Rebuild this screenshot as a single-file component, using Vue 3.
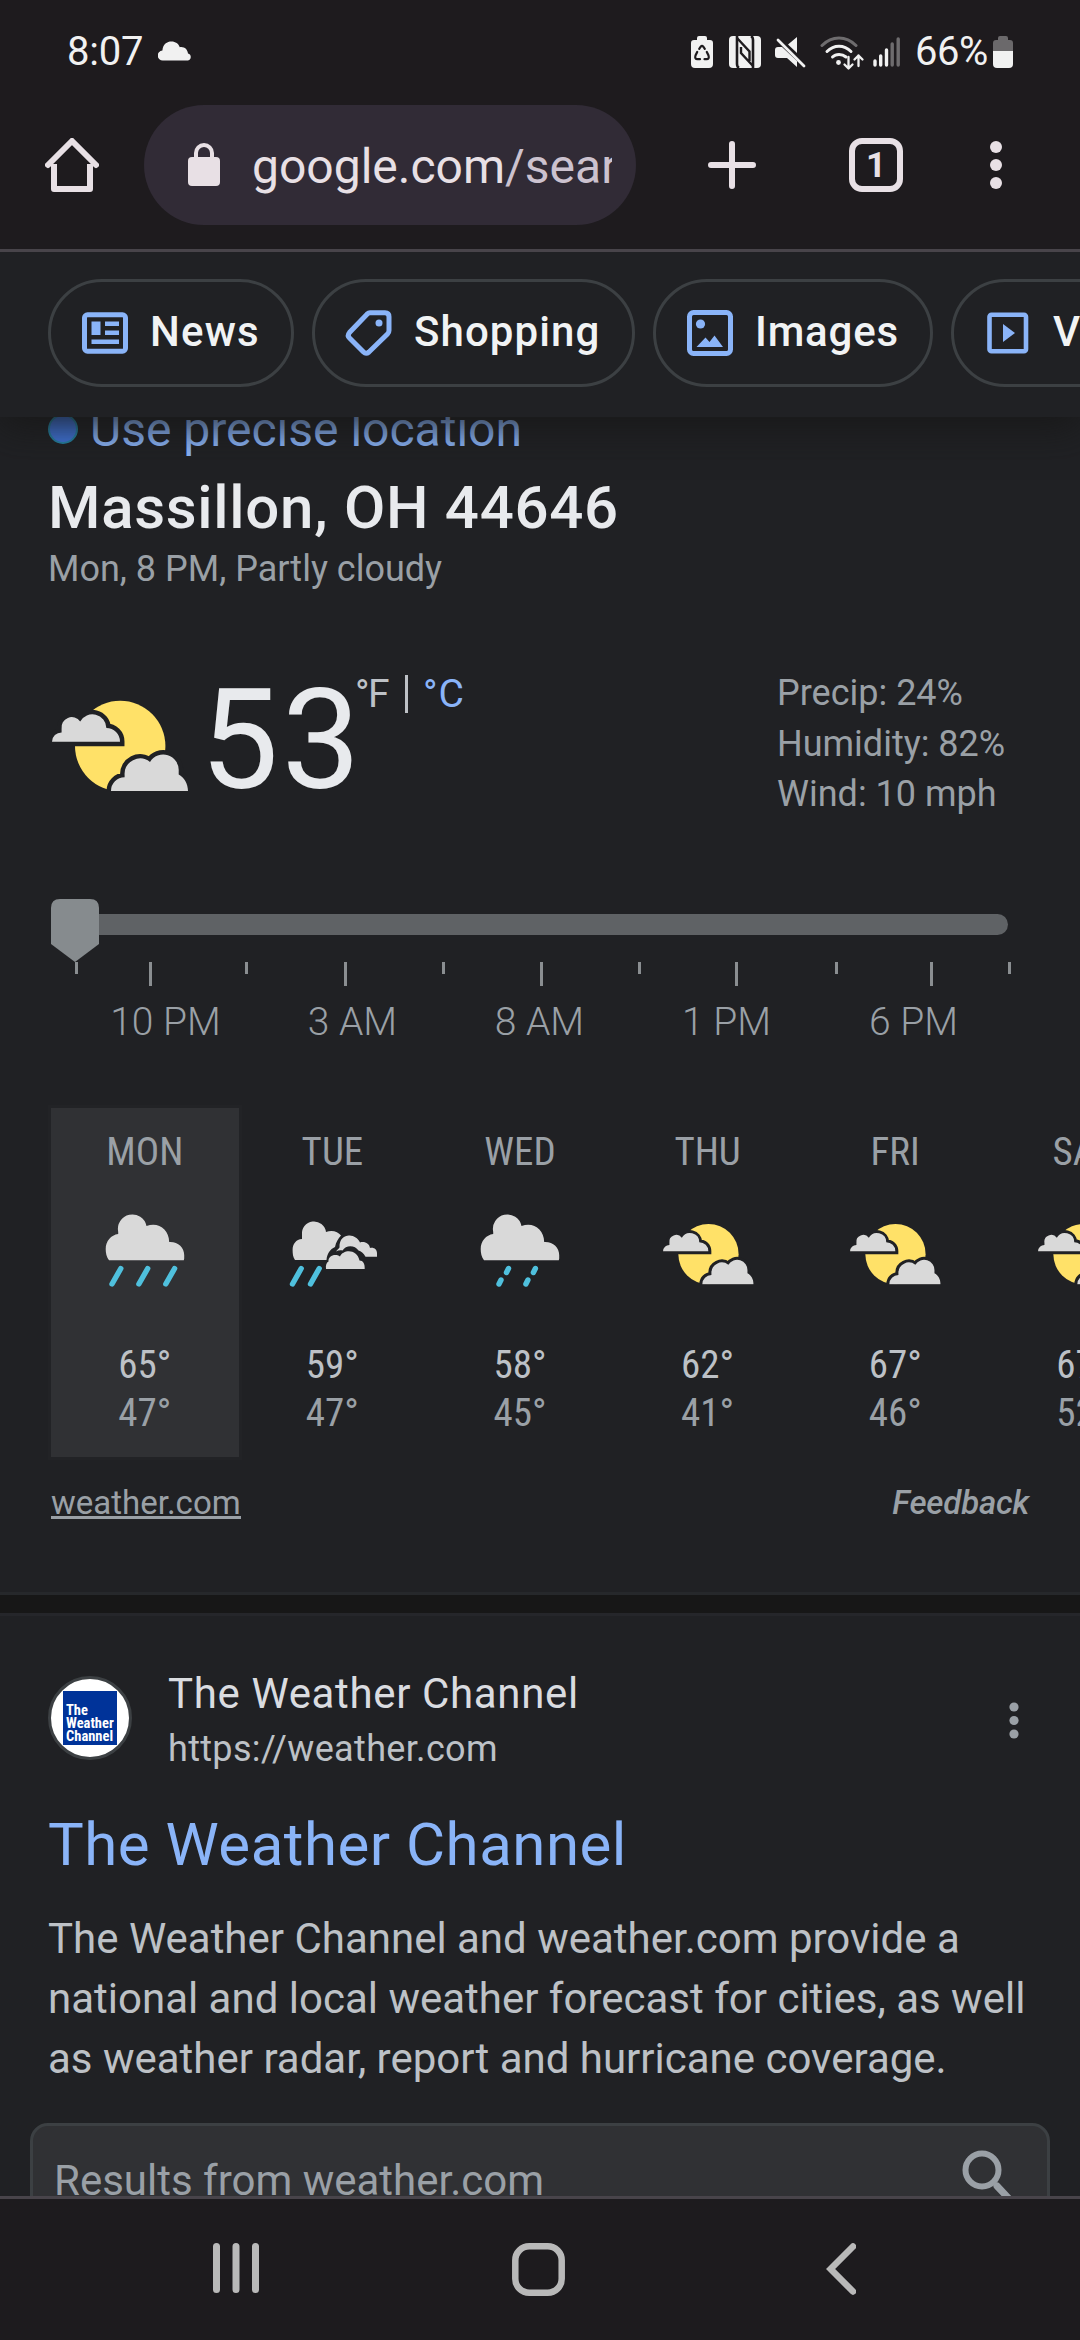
<script setup>
const chips = [
  { id: 'news', label: 'News', width: 246, spacing: 1.18 },
  { id: 'shopping', label: 'Shopping', width: 323, spacing: 1.09 },
  { id: 'images', label: 'Images', width: 280, spacing: 0.81 },
  { id: 'videos', label: 'Videos', width: 266, spacing: 0.9 },
]

const conditions = ['Precip: 24%', 'Humidity: 82%', 'Wind: 10 mph']

const shortTicks = [24, 194, 391, 587, 784, 957]
const longTicks = [98, 293, 489, 684, 879]
const hours = ['10 PM', '3 AM', '8 AM', '1 PM', '6 PM']

const days = [
  { name: 'MON', icon: 'rain', high: 65, low: 47 },
  { name: 'TUE', icon: 'scattered', high: 59, low: 47 },
  { name: 'WED', icon: 'showers', high: 58, low: 45 },
  { name: 'THU', icon: 'partly', high: 62, low: 41 },
  { name: 'FRI', icon: 'partly', high: 67, low: 46 },
  { name: 'SAT', icon: 'partly', high: 67, low: 52 },
]
</script>

<template>
  <div class="phone">
    <!-- Shared weather glyphs -->
    <svg class="defs" width="0" height="0" aria-hidden="true">
      <symbol id="partly" viewBox="0 0 136 92">
        <circle cx="68.2" cy="46" r="45.2" fill="#ffe168" />
        <path class="halo" d="M0 41.7A9.5 9.5 0 0 1 9.6 32.4V29A10.3 10.3 0 0 1 28.2 21.5A14 14 0 0 1 54.4 28A13.6 13.6 0 0 1 68 41.7Z" />
        <path fill="#d9d9d9" d="M0 41.7A9.5 9.5 0 0 1 9.6 32.4V29A10.3 10.3 0 0 1 28.2 21.5A14 14 0 0 1 54.4 28A13.6 13.6 0 0 1 68 41.7Z" />
        <path class="halo" d="M59 91A13.6 13.6 0 0 1 72.6 77.3V75A15.6 15.6 0 0 1 98 62A15.5 15.5 0 0 1 126.7 71V74.5C132 77 136 84 136 91Z" />
        <path fill="#d9d9d9" d="M59 91A13.6 13.6 0 0 1 72.6 77.3V75A15.6 15.6 0 0 1 98 62A15.5 15.5 0 0 1 126.7 71V74.5C132 77 136 84 136 91Z" />
      </symbol>
      <symbol id="bigcloud" viewBox="0 0 96 96">
        <path fill="#d9d9d9" d="M12 60.3C9.5 57 8.7 53 8.7 49C8.7 41 14 35 21.2 34V32A14.4 14.4 0 0 1 49.5 26C61 21.5 72 29 72.2 42C81 41.5 87.2 47.5 87.2 55V58.5L86.8 60.3Z" />
      </symbol>
    </svg>

    <header class="status">
      <span class="clock">8:07</span>
      <svg class="cloud" width="34" height="20" viewBox="0 0 34 20">
        <path fill="#f1f1f1" d="M5 19.5A5 5 0 0 1 4.4 9.5C5 3 9 .5 13.5 .5C17.5 .5 20.5 2.7 21.8 6.2C26.5 5.5 29.5 8.5 30 12.5A3.6 3.6 0 0 1 30 19.5Z" />
      </svg>
      <div class="status-icons">
        <svg width="22" height="32" viewBox="0 0 22 32">
          <path fill="#f1f1f1" d="M6 4V2Q6 0 8 0H14Q16 0 16 2V4H19Q22 4 22 7V28Q22 32 18 32H4Q0 32 0 28V7Q0 4 3 4Z" />
          <g fill="none" stroke="#1e1b1e" stroke-width="2.2" stroke-linecap="round">
            <path d="M8.2 12.8L9.7 10.7Q11 9.2 12.3 10.7L13.8 12.8" />
            <path d="M15.8 16L17.5 19.5Q18.6 23 15.5 23.2H13.5" />
            <path d="M9 23.2H6.5Q3.4 23 4.5 19.5L6.2 16" />
          </g>
        </svg>
        <svg width="32" height="32" viewBox="0 0 32 32">
          <rect width="32" height="32" rx="4" fill="#f1f1f1" />
          <path d="M8 0V28Q8 31 10 32M24 32V4Q24 1 22 0" fill="none" stroke="#1e1b1e" stroke-width="2.6" />
          <path d="M8 2L20.5 15.5V25M24 30L12 17V11" fill="none" stroke="#1e1b1e" stroke-width="2.4" />
        </svg>
        <svg width="31" height="32" viewBox="0 0 31 32">
          <path fill="#f1f1f1" d="M0 14Q0 11 3 11H7L22 25V31L12 22H3Q0 22 0 19ZM22 1V17L13 8.5Z" />
          <path d="M3 4L29 30" stroke="#f1f1f1" stroke-width="2.8" stroke-linecap="round" />
        </svg>
        <svg width="45" height="36" viewBox="0 0 45 36">
          <g fill="none" stroke="#f1f1f1" stroke-width="3" stroke-linecap="round">
            <path d="M2 9.5C12 -.5 26 -.5 36 9.5" stroke="#6e6c6e" />
            <path d="M7 15.5C14 8.5 24 8.5 31 15.5" />
            <path d="M12.5 21C16 17.5 22 17.5 26 21" />
          </g>
          <circle cx="18.5" cy="26.5" r="2.4" fill="#f1f1f1" />
          <g fill="none" stroke="#f1f1f1" stroke-width="2.3" stroke-linecap="round" stroke-linejoin="round">
            <path d="M28.5 21V32.5M24.5 28.5L28.5 32.5L32.5 28.5" />
            <path d="M38.5 30V19.5M34.5 23.5L38.5 19.5L42.5 23.5" />
          </g>
        </svg>
        <svg width="28" height="32" viewBox="0 0 28 32">
          <g stroke-width="3.4" stroke-linecap="round" stroke="#f1f1f1">
            <path d="M2 25V29M7.7 20V29M13.5 14V29" />
            <path d="M19.2 8V29M25.2 3V29" stroke="#6e6c6e" />
          </g>
        </svg>
        <span class="percent">66%</span>
        <svg width="20" height="32" viewBox="0 0 20 32">
          <path fill="#6b696b" d="M5 4V2Q5 0 7 0H13Q15 0 15 2V4H17Q20 4 20 7V16H0V7Q0 4 3 4Z" />
          <path fill="#f1f1f1" d="M0 15H20V28Q20 32 16 32H4Q0 32 0 28Z" />
        </svg>
      </div>
    </header>

    <div class="toolbar">
      <svg class="home" width="54" height="54" viewBox="0 0 54 54">
        <path d="M9 26V51H45V26" fill="none" stroke="#e8e0e5" stroke-width="6" stroke-linejoin="round" />
        <path d="M3 27L27 3L51 27" fill="none" stroke="#e8e0e5" stroke-width="6" stroke-linecap="round" stroke-linejoin="round" />
      </svg>
      <div class="omnibox">
        <svg width="32" height="43" viewBox="0 0 32 43">
          <path d="M8 17V10A8 8 0 0 1 24 10V17" fill="none" stroke="#e8e0e5" stroke-width="4" />
          <rect y="14" width="32" height="29" rx="4" fill="#e8e0e5" />
        </svg>
        <div class="url">google.com<span>/search</span></div>
      </div>
      <svg class="plus" width="48" height="48" viewBox="0 0 48 48">
        <path d="M24 3V45M3 24H45" stroke="#e8e0e5" stroke-width="6" stroke-linecap="round" />
      </svg>
      <div class="tabs">1</div>
      <svg class="more" width="12" height="48" viewBox="0 0 12 48" fill="#e8e0e5">
        <circle cx="6" cy="6" r="6" /><circle cx="6" cy="24" r="6" /><circle cx="6" cy="42" r="6" />
      </svg>
    </div>

    <nav class="chips">
      <div v-for="chip in chips" :key="chip.id" class="chip" :style="{ width: chip.width + 'px' }">
        <svg width="54" height="54" viewBox="0 0 54 54" fill="none" stroke="#8ab4f8" stroke-width="5">
          <template v-if="chip.id === 'news'">
            <rect x="6.5" y="8.8" width="41" height="36.4" rx="3" />
            <g fill="#8ab4f8" stroke="none">
              <rect x="13.5" y="15.5" width="9" height="13.5" />
              <rect x="27" y="15.5" width="14" height="4.5" />
              <rect x="27" y="24.5" width="14" height="4.5" />
              <rect x="13.5" y="33.5" width="27.5" height="4.5" />
            </g>
          </template>
          <template v-else-if="chip.id === 'shopping'">
            <path d="M28 6.8H43Q47 6.8 47 10.8V24.5Q47 26.5 45.5 28L27 46Q24 48.5 21.5 46L7.5 32Q5 29.5 7.5 26.5L25 8.2Q26.5 6.8 28 6.8Z" />
            <circle cx="37" cy="17" r="3.5" fill="#8ab4f8" stroke="none" />
          </template>
          <template v-else-if="chip.id === 'images'">
            <rect x="6.5" y="6.5" width="41" height="41" rx="4" />
            <g fill="#8ab4f8" stroke="none">
              <circle cx="17.5" cy="18" r="4.6" />
              <path d="M13.5 41L22.5 31.5L26.5 36L31.5 29.5L40 41Z" />
            </g>
          </template>
          <template v-else>
            <rect x="8.5" y="8.8" width="36.5" height="36.4" rx="2" stroke-width="4.6" />
            <path d="M22 18L34 27L22 36Z" fill="#8ab4f8" stroke="none" />
          </template>
        </svg>
        <span :style="{ letterSpacing: chip.spacing + 'px' }">{{ chip.label }}</span>
      </div>
    </nav>

    <main class="page">
      <section class="weather">
        <a class="precise"><i></i>Use precise location</a>
        <h1>Massillon, OH 44646</h1>
        <p class="subtitle">Mon, 8 PM, Partly cloudy</p>

        <div class="current">
          <svg class="now" width="136" height="92"><use href="#partly" width="136" height="92" /></svg>
          <span class="temp">53</span>
          <div class="units"><span>°F</span><i></i><a>°C</a></div>
          <ul>
            <li v-for="line in conditions" :key="line">{{ line }}</li>
          </ul>
        </div>

        <svg class="slider" width="960" height="87" viewBox="0 0 960 87">
          <rect x="10" y="15" width="947" height="21" rx="10.5" fill="#5f6265" />
          <path d="M0 9Q0 0 9 0H39Q48 0 48 9V45L24 63L0 45Z" fill="#868b8e" />
          <g fill="#8a8e91">
            <rect v-for="x in shortTicks" :key="'s' + x" :x="x" y="63" width="3" height="12" />
            <rect v-for="x in longTicks" :key="'l' + x" :x="x" y="63" width="3" height="24" />
          </g>
        </svg>
        <div class="hours"><span v-for="h in hours" :key="h">{{ h }}</span></div>

        <div class="days">
          <div v-for="(day, i) in days" :key="day.name" class="day" :class="{ active: i === 0 }">
            <span class="name">{{ day.name }}</span>
            <svg width="96" height="96" viewBox="0 0 96 96">
              <use v-if="day.icon === 'partly'" href="#partly" x="3" y="23.5" width="90.7" height="61.3" />
              <template v-else-if="day.icon === 'scattered'">
                <g fill="#d9d9d9">
                  <path d="M11 60C9 57 8.6 54 8.6 50C8.6 44 12 39.5 18 39V35A12 12 0 0 1 42 32C48 29.5 54 31.5 57 35.5C54 39 52 42 51 47C46 49 43 54 42.5 60Z" />
                  <path d="M52 51.5C53.5 49.5 54.5 49 55.5 47.5C55 37 63 34.5 67 35.8C72 36.5 74.5 39.5 76 42.5C81 41 85.5 44 86 48C90 47 93 49.5 93 53V56.7H81.5C79.5 53 77 51 74.5 50.5C71 45 62 44.5 58.5 50.5C56 50 54 50.5 52 51.5Z" />
                  <path d="M42 69C41.5 65 42.5 62.5 44.5 61.5C44 56 51 53 56 56.5C59 49.5 73 48.5 75.5 60.5C79 60.5 81 63.5 80.7 69Z" />
                </g>
                <path class="drop" d="M17.2 68.5L8.5 84M35.2 68.5L26.5 84" />
              </template>
              <template v-else>
                <use href="#bigcloud" width="96" height="96" />
                <path v-if="day.icon === 'rain'" class="drop" d="M23.8 68.5L15 84M50.7 68.5L41.9 84M77.6 68.5L68.8 84" />
                <path v-else class="drop" d="M36.5 68.5L34.5 72.5M29 80L27 84M63.4 68.5L61.4 72.5M55.9 80L53.9 84" />
              </template>
            </svg>
            <span class="high">{{ day.high }}°</span>
            <span class="low">{{ day.low }}°</span>
          </div>
        </div>

        <div class="credits"><a>weather.com</a><em>Feedback</em></div>
      </section>

      <section class="result">
        <div class="source">
          <div class="favicon"><div><b>The<br>Weather<br>Channel</b></div></div>
          <div class="site">
            <span class="site-name">The Weather Channel</span>
            <span class="site-url">https://weather.com</span>
          </div>
          <svg width="10" height="37" viewBox="0 0 10 37" fill="#9aa0a6">
            <circle cx="5" cy="5" r="4.6" /><circle cx="5" cy="18.5" r="4.6" /><circle cx="5" cy="32" r="4.6" />
          </svg>
        </div>
        <h2>The Weather Channel</h2>
        <p class="snippet">The Weather Channel and weather.com provide a national and local weather forecast for cities, as well as weather radar, report and hurricane coverage.</p>
        <div class="sitesearch">
          <span>Results from weather.com</span>
          <svg width="54" height="54" viewBox="0 0 54 54" fill="none" stroke="#9aa0a6">
            <circle cx="20" cy="20" r="16.5" stroke-width="6" />
            <path d="M35 36L50 52" stroke-width="7" stroke-linecap="round" />
          </svg>
        </div>
      </section>
    </main>

    <footer class="navbar">
      <svg width="46" height="50" viewBox="0 0 46 50" stroke="#b9b9b9" stroke-width="7" stroke-linecap="round">
        <path d="M3.5 3.5V46.5M23 3.5V46.5M42.5 3.5V46.5" />
      </svg>
      <svg class="nav-home" width="53" height="53" viewBox="0 0 53 53" fill="none" stroke="#b9b9b9" stroke-width="6.5">
        <rect x="3.3" y="3.3" width="46.4" height="46.4" rx="14" />
      </svg>
      <svg class="nav-back" width="30" height="52" viewBox="0 0 30 52" fill="none" stroke="#b9b9b9" stroke-width="6.5" stroke-linecap="round">
        <path d="M27 3.5L4.6 26L27 48.5" />
      </svg>
    </footer>
  </div>
</template>

<style>
body {
  background: #202124;
}
</style>

<style scoped>
.phone {
  display: flex;
  flex-direction: column;
  width: 1080px;
  height: 2340px;
  overflow: hidden;
  background: #202124;
  font-family: Roboto, sans-serif;
  color: #e8eaed;
}
.phone * {
  box-sizing: border-box;
}
svg {
  display: block;
  flex: none;
}
.defs {
  position: absolute;
}
h1, h2, p, ul {
  margin: 0;
  padding: 0;
  list-style: none;
}

/* Status bar */
.status {
  display: flex;
  align-items: flex-start;
  height: 105px;
  flex: none;
  padding: 28px 67px 0;
  background: #1e1b1e;
  color: #f1f1f1;
  font-size: 40px;
  line-height: 48px;
}
.clock {
  width: 91px;
  letter-spacing: -0.2px;
}
.cloud {
  margin-top: 13px;
}
.status-icons {
  display: flex;
  align-items: flex-start;
  margin-left: auto;
}
.status-icons svg {
  margin-top: 8px;
  margin-right: 14px;
}
.status-icons svg:nth-child(1) {
  margin-right: 16px;
}
.status-icons svg:nth-child(4) {
  margin-right: 8px;
}
.status-icons svg:last-child {
  margin-right: 0;
}
.percent {
  margin-right: 5px;
  letter-spacing: -0.4px;
}

/* Browser toolbar */
.toolbar {
  display: flex;
  align-items: center;
  height: 147px;
  flex: none;
  padding: 0 78px 24px 45px;
  background: #1e1b1e;
  border-bottom: 3px solid #48444a;
}
.omnibox {
  display: flex;
  align-items: center;
  width: 492px;
  height: 120px;
  margin-left: 45px;
  padding: 0 24px 0 44px;
  border-radius: 60px;
  background: #312b36;
}
.omnibox svg {
  margin-top: -2px;
}
.url {
  width: 360px;
  margin-left: 32px;
  padding-top: 3px;
  overflow: hidden;
  white-space: nowrap;
  font-size: 48px;
  line-height: 66px;
  color: #e8e0e5;
}
.url span {
  color: #ccc2cf;
}
.plus {
  margin-left: 72px;
}
.tabs {
  width: 54px;
  height: 54px;
  margin-left: 93px;
  border: 6px solid #e8e0e5;
  border-radius: 13px;
  text-align: center;
  font-size: 35px;
  font-weight: 700;
  line-height: 43px;
  color: #e8e0e5;
}
.more {
  margin-left: 87px;
}

/* Search filters */
.chips {
  position: relative;
  z-index: 1;
  display: flex;
  gap: 18px;
  height: 165px;
  flex: none;
  padding: 27px 0 0 48px;
  background: #202124;
  box-shadow: 0 9px 36px rgba(23, 23, 23, 0.9);
  clip-path: inset(0 0 -80px 0);
}
.chip {
  display: flex;
  align-items: center;
  flex: none;
  gap: 18px;
  height: 108px;
  padding-left: 27px;
  border: 3px solid #3c4043;
  border-radius: 54px;
  font-size: 42px;
  font-weight: 500;
  line-height: 54px;
  color: #f1f3f4;
}
.chip span {
  margin-top: -2px;
}

/* Weather */
.page {
  flex: 1;
  min-height: 0;
  overflow: hidden;
}
.weather {
  display: flow-root;
  height: 1178px;
  padding: 0 48px;
  border-bottom: 3px solid #26282b;
}
.precise {
  display: flex;
  align-items: center;
  gap: 12px;
  height: 60px;
  margin-top: -17px;
  font-size: 48px;
  line-height: 60px;
  color: #8ab4f8;
}
.precise i {
  width: 30px;
  height: 30px;
  margin-top: -2px;
  border: 2px solid #2583a5;
  border-radius: 50%;
  background: #4075dc;
}
h1 {
  margin-top: 12px;
  font-size: 60px;
  font-weight: 500;
  line-height: 72px;
  letter-spacing: 0.7px;
}
.subtitle {
  font-size: 36px;
  line-height: 50px;
  color: #9aa0a6;
}
.current {
  display: flex;
  align-items: flex-start;
  height: 152px;
  margin-top: 74px;
  padding-left: 4px;
}
.now {
  margin-top: 32px;
}
.temp {
  width: 165px;
  padding-left: 12px;
  font-size: 140px;
  line-height: 145px;
  letter-spacing: 3px;
}
.units {
  display: flex;
  align-items: center;
  height: 48px;
  margin-top: 2px;
  font-size: 39px;
  line-height: 48px;
  color: #bdc1c6;
}
.units span {
  width: 52px;
  padding-left: 2px;
  letter-spacing: -1.5px;
}
.units i {
  width: 3px;
  height: 38px;
  margin-right: 15px;
  background: #bdc1c6;
}
.units a {
  letter-spacing: 1px;
  color: #8ab4f8;
}
.current ul {
  width: 255px;
  margin-left: auto;
  font-size: 36px;
  line-height: 50.5px;
  color: #9aa0a6;
}
.slider {
  margin: 79px 0 0 3px;
}
.hours {
  display: flex;
  margin: 12px 0 0 24px;
  font-size: 39px;
  font-weight: 300;
  line-height: 48px;
  color: #9aa0a6;
}
.hours span {
  width: 187px;
  text-align: center;
}
.days {
  display: flex;
  margin: 62px -48px 0 3px;
}
.day {
  display: flex;
  flex-direction: column;
  align-items: center;
  flex: none;
  width: 187.6px;
  height: 349px;
  padding-top: 21px;
  font-family: "Roboto Condensed", Roboto, sans-serif;
  font-size: 39px;
  line-height: 47px;
}
.day.active {
  background: #303134;
  box-shadow: 0 0 0 3px #222326;
}
.name {
  color: #9aa0a6;
}
.day svg {
  margin: 24px 0 46px;
}
.high {
  color: #bdc1c6;
}
.low {
  margin-top: 1px;
  color: #9aa0a6;
}
.halo {
  fill: #202124;
  stroke: #202124;
  stroke-width: 9px;
}
.drop {
  fill: none;
  stroke: #4fc0dd;
  stroke-width: 5.4px;
  stroke-linecap: round;
}
.credits {
  display: flex;
  justify-content: space-between;
  margin-top: 25px;
  padding: 0 3px;
  font-size: 33px;
  line-height: 42px;
  color: #9aa0a6;
}
.credits a {
  height: 37px;
  border-bottom: 3px solid #9aa0a6;
}
.credits em {
  font-weight: 500;
  letter-spacing: -0.2px;
}

/* Search result */
.result {
  border-top: 18px solid #171717;
  padding: 60px 30px 0;
  box-shadow: inset 0 3px #25262a;
}
.source {
  display: flex;
  align-items: center;
  height: 90px;
  padding: 0 31px 0 18px;
}
.favicon {
  display: flex;
  align-items: center;
  justify-content: center;
  width: 84px;
  height: 84px;
  border: 3px solid #3c4043;
  border-radius: 50%;
  background: #fff;
}
.favicon div {
  display: flex;
  align-items: flex-end;
  width: 54px;
  height: 54px;
  padding: 0 0 2px 3px;
  background: #039;
}
.favicon b {
  font-family: "Roboto Condensed", Roboto, sans-serif;
  font-size: 14.5px;
  line-height: 13px;
  color: #fff;
}
.site {
  display: flex;
  flex-direction: column;
  flex: 1;
  margin-top: 7px;
  padding-left: 36px;
}
.site-name {
  font-size: 42px;
  line-height: 54px;
  letter-spacing: 0.64px;
  color: #dadce0;
}
.site-url {
  margin-top: 1px;
  font-size: 36px;
  line-height: 54px;
  letter-spacing: 0.33px;
  color: #bdc1c6;
}
.source svg {
  margin-top: 5px;
}
h2 {
  margin: 46px 18px 0;
  font-size: 60px;
  font-weight: 400;
  line-height: 72px;
  letter-spacing: 0.5px;
  color: #8ab4f8;
}
.snippet {
  margin: 28px 18px 0;
  font-size: 42px;
  line-height: 60px;
  color: #bdc1c6;
}
.sitesearch {
  display: flex;
  justify-content: space-between;
  height: 120px;
  margin-top: 34px;
  padding: 24px 31px 0 21px;
  border: 3px solid #3c4043;
  border-radius: 18px;
  background: #303134;
  font-size: 42px;
  line-height: 62px;
  color: #9aa0a6;
}

/* System navigation */
.navbar {
  display: flex;
  flex: none;
  height: 144px;
  padding: 44px 0 0 213px;
  background: #1d1b1e;
  border-top: 3px solid #48444a;
}
.nav-home {
  margin-left: 253px;
}
.nav-back {
  margin-left: 261px;
}
</style>
